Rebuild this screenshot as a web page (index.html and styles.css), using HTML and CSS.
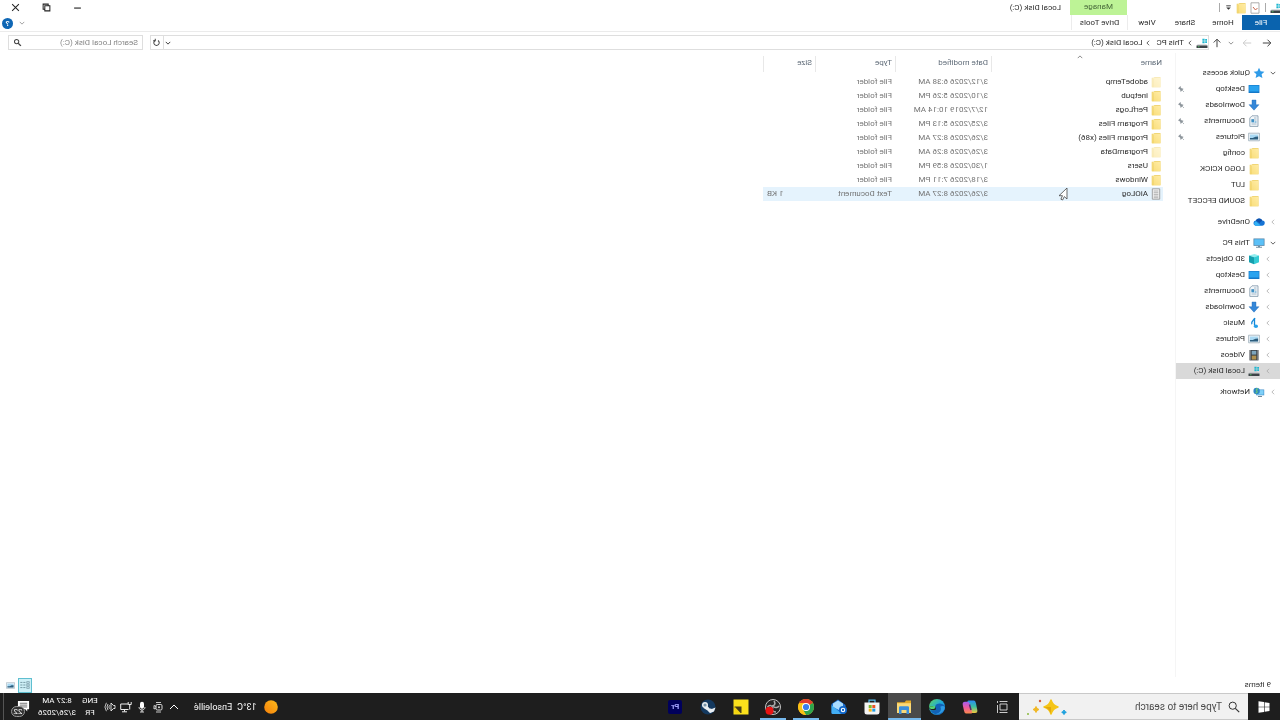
FILE: index.html
```
<!DOCTYPE html>
<html lang="en">
<head>
    <meta charset="UTF-8">
    <meta name="viewport" content="width=device-width, initial-scale=1.0">
    <title>Local Disk (C:)</title>
    <link rel="stylesheet" href="styles.css">
</head>
<body>
    <!-- Shared icons -->
    <svg class="sprite" aria-hidden="true">
        <defs>
            <linearGradient id="gFolder" x1="0" y1="0" x2="1" y2="1">
                <stop offset="0" stop-color="#ffeca6"/><stop offset="1" stop-color="#f9dd78"/>
            </linearGradient>
            <linearGradient id="gEdge" x1="0" y1="1" x2="1" y2="0">
                <stop offset="0" stop-color="#1567c8"/><stop offset=".5" stop-color="#1fa9dc"/><stop offset="1" stop-color="#62d858"/>
            </linearGradient>
            <linearGradient id="gCopA" x1="0" y1="0" x2="0" y2="1">
                <stop offset="0" stop-color="#2a8bf2"/><stop offset=".5" stop-color="#39c0a0"/><stop offset="1" stop-color="#f5c83c"/>
            </linearGradient>
            <linearGradient id="gCopB" x1="0" y1="0" x2="0" y2="1">
                <stop offset="0" stop-color="#a45cf0"/><stop offset=".5" stop-color="#ee5a9c"/><stop offset="1" stop-color="#fa8a4c"/>
            </linearGradient>
            <linearGradient id="gSun" x1="0" y1="0" x2="1" y2="1">
                <stop offset="0" stop-color="#fdbb1c"/><stop offset="1" stop-color="#f57f0a"/>
            </linearGradient>
        </defs>
        <symbol id="folder" viewBox="0 0 12 12">
            <path d="M1.500 1h6l.8.800h2v9.400H1.500z" fill="#ecd06a"/>
            <path d="M1.500 1.800h6.700l1.700 1v8.400H1.500z" fill="url(#gFolder)"/>
            <path d="M9 2.800v8.400" stroke="#e5c655" stroke-width=".6"/>
        </symbol>
        <symbol id="drive" viewBox="0 0 12 12">
            <path d="M1.500 7.500h9l1 1.500H.5z" fill="#b9bec2"/>
            <path d="M.5 8.600h11v2.400H.5z" fill="#3c4347"/>
            <path d="M8.500 9.400h1.600v.8H8.500z" fill="#55d66b"/>
            <path d="M1 2h1.800v1.700H1zM3.400 1.700h2.200v2H3.400zM1 4.300h1.800v1.700H1zM3.400 4.300h2.200v2H3.400z" fill="#1fb6cf"/>
        </symbol>
        <symbol id="star" viewBox="0 0 12 12">
            <path d="M6 .8l1.600 3.500 3.800.4-2.800 2.600.8 3.800L6 9.200l-3.400 1.900.8-3.800L.6 4.700l3.800-.4z" fill="#2f9be8"/>
        </symbol>
        <symbol id="desktop" viewBox="0 0 12 12">
            <path d="M.6 2h10.800v8H.6z" fill="#1478c8"/>
            <path d="M1.200 2.600h9.600v5.900H1.200z" fill="#29a3ef"/>
        </symbol>
        <symbol id="download" viewBox="0 0 12 12">
            <path d="M4 1h4v4.700h3L6 11.200 1 5.700h3z" fill="#3587d8" stroke="#2269b5" stroke-width=".4"/>
        </symbol>
        <symbol id="document" viewBox="0 0 12 12">
            <path d="M2 .8h6l2.200 2.200v8.400H2z" fill="#f3f7fa" stroke="#7f96a8" stroke-width=".8"/>
            <path d="M3.500 3h2.500M3.500 5h5M3.500 9h5" stroke="#8fa9bc" stroke-width=".8"/>
            <path d="M6 4.200h2.600v3.200H6z" fill="#3f90c4"/><path d="M3.500 7h2" stroke="#3f90c4"/>
        </symbol>
        <symbol id="picture" viewBox="0 0 12 12">
            <path d="M.6 2.200h10.800v7.600H.6z" fill="#f4f7f9" stroke="#8fa3b0" stroke-width=".7"/>
            <path d="M1.900 3.500h8.200v5H1.900z" fill="#a8d8f3"/>
            <path d="M1.900 8.500V5.500l2.700.2 2.600 1.200 2.900.2v1.400z" fill="#2d5d7d"/>
        </symbol>
        <symbol id="cloud" viewBox="0 0 12 12">
            <path d="M3 9.800a2.600 2.600 0 01-.3-5.200A3.600 3.600 0 019.200 4.500a2.700 2.700 0 01.3 5.300z" fill="#1673d4"/>
            <path d="M4 9.800l5-4.600a2.500 2.500 0 01.5 4.600z" fill="#31b2f5"/>
            <path d="M2.700 4.600A3.600 3.600 0 019.200 4.500L5.500 7z" fill="#0f52ac"/>
        </symbol>
        <symbol id="pc" viewBox="0 0 12 12">
            <path d="M.5 1.500h11v7.300H.5z" fill="#4a7fa5"/>
            <path d="M1.200 2.200h9.600v5.900H1.200z" fill="#5bc0f7"/>
            <path d="M5 8.800h2v1H5zM3 9.800h6v1H3z" fill="#7190a3"/>
        </symbol>
        <symbol id="cube" viewBox="0 0 12 12">
            <path d="M1 2.600L5.500 1l5.500 1.600-5 1.700z" fill="#92eef0"/>
            <path d="M1 2.600l5 1.700v7L1 9.300z" fill="#35cbd4"/>
            <path d="M11 2.600L6 4.300v7l5-2z" fill="#159fae"/>
        </symbol>
        <symbol id="music" viewBox="0 0 12 12">
            <path d="M5.500 1v7.500" stroke="#1588d8" stroke-width="1.300"/>
            <path d="M5.200 1c.6 2.500 4.200 2.800 3 6.300" fill="none" stroke="#1588d8" stroke-width="1.300"/>
            <ellipse cx="4.100" cy="9.300" rx="2.100" ry="1.700" fill="#27a0ea"/>
        </symbol>
        <symbol id="video" viewBox="0 0 12 12">
            <path d="M1.500 1h9v10.400h-9z" fill="#3a3f44"/>
            <path d="M3.700 1.800h4.600v3.800H3.700z" fill="#7da5bd"/><path d="M3.700 6.600h4.600v4H3.700z" fill="#b0914f"/>
            <path d="M2.500 1.500v9.500M9.500 1.500v9.500" stroke="#c7ccd0" stroke-width=".8" stroke-dasharray="1 1"/>
        </symbol>
        <symbol id="network" viewBox="0 0 12 12">
            <path d="M.8 3.500h8v5.800h-8z" fill="#3f8fca"/><path d="M1.400 4.100h6.800v4.600H1.400z" fill="#7fd0f8"/>
            <path d="M3 10h4v1H3z" fill="#6b8799"/>
            <circle cx="8.400" cy="5" r="3.200" fill="#2f87c5"/><path d="M7 3c1.500-.6 2 1 1.200 1.800S8 7 9.500 7" stroke="#6ccb77" stroke-width="1.200" fill="none"/>
        </symbol>
        <symbol id="textfile" viewBox="0 0 12 12">
            <path d="M2.300.8h7.400v10.400H2.300z" fill="#f3f3f3" stroke="#8d8d8d" stroke-width=".8"/>
            <path d="M3.700 3h4.600M3.700 4.700h4.600M3.700 6.400h4.600M3.700 8.100h4.600M3.700 9.700h4.600" stroke="#999" stroke-width=".7"/>
        </symbol>
        <symbol id="pin" viewBox="0 0 12 12">
            <path d="M6.800 1.500l3.700 3.700-1 .5-.5-.1-2 2 .1 1.700-.9.700L2.300 6l.7-.9 1.700.1 2-2-.4-.8z" fill="#8d959b"/>
            <path d="M4.200 7.800L1.500 10.500" stroke="#8d959b"/>
        </symbol>
        <symbol id="chevRight" viewBox="0 0 8 8"><path d="M2.500 1L5.500 4l-3 3" fill="none" stroke="currentColor" stroke-width="1"/></symbol>
        <symbol id="chevDown" viewBox="0 0 8 8"><path d="M1 2.500L4 5.500l3-3" fill="none" stroke="currentColor" stroke-width="1.200"/></symbol>
        <symbol id="chevUp" viewBox="0 0 8 8"><path d="M1 5.500L4 2.500l3 3" fill="none" stroke="currentColor" stroke-width="1"/></symbol>
        <symbol id="arrow" viewBox="0 0 12 12"><path d="M10.200 6H2.200M5.500 2.700L2.200 6l3.300 3.300" fill="none" stroke="currentColor"/></symbol>
        <symbol id="search" viewBox="0 0 12 12"><circle cx="7.300" cy="4.700" r="3.600" fill="none" stroke="currentColor"/><path d="M4.700 7.300L.8 11.200" stroke="currentColor" stroke-width="1.200"/></symbol>
    </svg>

    <div class="screen">
        <header class="titlebar">
            <div class="quick-tools">
                <svg class="icon app-icon"><use href="#drive"/></svg>
                <span class="divider"></span>
                <button class="plain" aria-label="Properties">
                    <svg class="icon" viewBox="0 0 12 12"><path d="M2 .8h8v10.400H2z" fill="#fff" stroke="#999" stroke-width=".8"/><path d="M3.500 6l2 2 2.500-3" fill="none" stroke="#c8684f"/></svg>
                </button>
                <button class="plain" aria-label="New folder"><svg class="icon"><use href="#folder"/></svg></button>
                <button class="plain" aria-label="Customize">
                    <svg class="icon-sm" viewBox="0 0 8 8"><path d="M2 2.500h4" stroke="#333" stroke-width=".8"/><path d="M2 4h4L4 6z" fill="#333"/></svg>
                </button>
                <span class="divider"></span>
            </div>
            <div class="manage">Manage</div>
            <h1>Local Disk (C:)</h1>
            <div class="window-buttons">
                <button class="plain" aria-label="Minimize"><svg class="icon-sm" viewBox="0 0 8 8"><path d="M1 4.500h6" stroke="#222"/></svg></button>
                <button class="plain" aria-label="Restore"><svg class="icon-sm" viewBox="0 0 8 8"><path d="M1 2.500h4.500V7H1zM2.500 2.500V1H7v4.500H5.500" fill="none" stroke="#222" stroke-width=".9"/></svg></button>
                <button class="plain" aria-label="Close"><svg class="icon-sm" viewBox="0 0 8 8"><path d="M1 1l6 6M7 1L1 7" stroke="#222" stroke-width=".9"/></svg></button>
            </div>
        </header>

        <nav class="ribbon">
            <button class="tab file">File</button>
            <button class="tab">Home</button>
            <button class="tab">Share</button>
            <button class="tab">View</button>
            <button class="tab tools">Drive Tools</button>
            <div class="ribbon-end">
                <button class="plain muted" aria-label="Expand ribbon"><svg class="icon-xs"><use href="#chevDown"/></svg></button>
                <button class="help" aria-label="Help">?</button>
            </div>
        </nav>

        <div class="address-row">
            <button class="plain nav-btn" aria-label="Back"><svg class="icon"><use href="#arrow"/></svg></button>
            <button class="plain nav-btn disabled" aria-label="Forward"><svg class="icon flip"><use href="#arrow"/></svg></button>
            <button class="plain recent" aria-label="Recent"><svg class="icon-xs"><use href="#chevDown"/></svg></button>
            <button class="plain up" aria-label="Up"><svg class="icon" viewBox="0 0 12 12"><path d="M6 10.200V2.200M2.700 5.500L6 2.200l3.300 3.300" fill="none" stroke="#444"/></svg></button>
            <div class="address">
                <svg class="icon"><use href="#drive"/></svg>
                <svg class="icon-xs"><use href="#chevRight"/></svg>
                <a href="#">This PC</a>
                <svg class="icon-xs"><use href="#chevRight"/></svg>
                <a href="#">Local Disk (C:)</a>
                <button class="plain address-drop" aria-label="Previous locations"><svg class="icon-xs"><use href="#chevDown"/></svg></button>
                <button class="plain refresh" aria-label="Refresh"><svg class="icon-sm" viewBox="0 0 8 8"><path d="M5.300 2.200A2.400 2.400 0 112.700 2.200" fill="none" stroke="#444" stroke-width=".9"/><path d="M5.100.7v1.800h1.900" fill="none" stroke="#444" stroke-width=".9"/></svg></button>
            </div>
            <div class="search-box">
                <input type="text" placeholder="Search Local Disk (C:)" aria-label="Search Local Disk (C:)">
                <svg class="icon-sm" viewBox="0 0 8 8"><circle cx="4.800" cy="3.200" r="1.900" fill="none" stroke="#444" stroke-width=".9"/><path d="M3.400 4.600L1 7" stroke="#444" stroke-width="1.200"/></svg>
            </div>
        </div>

        <div class="content">
            <aside class="sidebar">
                <ul>
                    <li><svg class="icon-xs"><use href="#chevDown"/></svg><svg class="icon"><use href="#star"/></svg><a href="#">Quick access</a></li>
                    <li class="sub"><svg class="icon"><use href="#desktop"/></svg><a href="#">Desktop</a><svg class="pin"><use href="#pin"/></svg></li>
                    <li class="sub"><svg class="icon"><use href="#download"/></svg><a href="#">Downloads</a><svg class="pin"><use href="#pin"/></svg></li>
                    <li class="sub"><svg class="icon"><use href="#document"/></svg><a href="#">Documents</a><svg class="pin"><use href="#pin"/></svg></li>
                    <li class="sub"><svg class="icon"><use href="#picture"/></svg><a href="#">Pictures</a><svg class="pin"><use href="#pin"/></svg></li>
                    <li class="sub"><svg class="icon"><use href="#folder"/></svg><a href="#">config</a></li>
                    <li class="sub"><svg class="icon"><use href="#folder"/></svg><a href="#">LOGO KCICK</a></li>
                    <li class="sub"><svg class="icon"><use href="#folder"/></svg><a href="#">LUT</a></li>
                    <li class="sub"><svg class="icon"><use href="#folder"/></svg><a href="#">SOUND EFCCET</a></li>
                </ul>
                <ul>
                    <li><svg class="icon-xs faint"><use href="#chevRight"/></svg><svg class="icon"><use href="#cloud"/></svg><a href="#">OneDrive</a></li>
                </ul>
                <ul>
                    <li><svg class="icon-xs"><use href="#chevDown"/></svg><svg class="icon"><use href="#pc"/></svg><a href="#">This PC</a></li>
                    <li class="sub open"><svg class="icon-xs faint"><use href="#chevRight"/></svg><svg class="icon"><use href="#cube"/></svg><a href="#">3D Objects</a></li>
                    <li class="sub open"><svg class="icon-xs faint"><use href="#chevRight"/></svg><svg class="icon"><use href="#desktop"/></svg><a href="#">Desktop</a></li>
                    <li class="sub open"><svg class="icon-xs faint"><use href="#chevRight"/></svg><svg class="icon"><use href="#document"/></svg><a href="#">Documents</a></li>
                    <li class="sub open"><svg class="icon-xs faint"><use href="#chevRight"/></svg><svg class="icon"><use href="#download"/></svg><a href="#">Downloads</a></li>
                    <li class="sub open"><svg class="icon-xs faint"><use href="#chevRight"/></svg><svg class="icon"><use href="#music"/></svg><a href="#">Music</a></li>
                    <li class="sub open"><svg class="icon-xs faint"><use href="#chevRight"/></svg><svg class="icon"><use href="#picture"/></svg><a href="#">Pictures</a></li>
                    <li class="sub open"><svg class="icon-xs faint"><use href="#chevRight"/></svg><svg class="icon"><use href="#video"/></svg><a href="#">Videos</a></li>
                    <li class="sub open selected"><svg class="icon-xs faint"><use href="#chevRight"/></svg><svg class="icon"><use href="#drive"/></svg><a href="#">Local Disk (C:)</a></li>
                </ul>
                <ul>
                    <li><svg class="icon-xs faint"><use href="#chevRight"/></svg><svg class="icon"><use href="#network"/></svg><a href="#">Network</a></li>
                </ul>
            </aside>

            <main class="files">
                <table>
                    <thead>
                        <tr>
                            <th class="col-name"><span>Name</span><svg class="sort"><use href="#chevUp"/></svg></th>
                            <th class="col-date"><span>Date modified</span></th>
                            <th class="col-type"><span>Type</span></th>
                            <th class="col-size"><span>Size</span></th>
                        </tr>
                    </thead>
                    <tbody>
                        <tr class="hidden-item"><td><svg class="icon"><use href="#folder"/></svg>adobeTemp</td><td>3/12/2026 6:38 AM</td><td>File folder</td><td></td></tr>
                        <tr><td><svg class="icon"><use href="#folder"/></svg>inetpub</td><td>3/10/2026 5:26 PM</td><td>File folder</td><td></td></tr>
                        <tr><td><svg class="icon"><use href="#folder"/></svg>PerfLogs</td><td>12/7/2019 10:14 AM</td><td>File folder</td><td></td></tr>
                        <tr><td><svg class="icon"><use href="#folder"/></svg>Program Files</td><td>3/25/2026 5:13 PM</td><td>File folder</td><td></td></tr>
                        <tr><td><svg class="icon"><use href="#folder"/></svg>Program Files (x86)</td><td>3/26/2026 8:27 AM</td><td>File folder</td><td></td></tr>
                        <tr class="hidden-item"><td><svg class="icon"><use href="#folder"/></svg>ProgramData</td><td>3/26/2026 8:26 AM</td><td>File folder</td><td></td></tr>
                        <tr><td><svg class="icon"><use href="#folder"/></svg>Users</td><td>1/30/2026 8:59 PM</td><td>File folder</td><td></td></tr>
                        <tr><td><svg class="icon"><use href="#folder"/></svg>Windows</td><td>3/18/2026 7:11 PM</td><td>File folder</td><td></td></tr>
                        <tr class="hovered"><td><svg class="icon"><use href="#textfile"/></svg>AiOLog</td><td>3/26/2026 8:27 AM</td><td>Text Document</td><td>1 KB</td></tr>
                    </tbody>
                </table>
            </main>
        </div>

        <footer class="status">
            <span>9 items</span>
            <div class="views">
                <button class="view active" aria-label="Details">
                    <svg viewBox="0 0 14 14"><path d="M2 3h3v2H2zM2 6h3v2H2zM2 9h3v2H2z" fill="none" stroke="#6b8f9a" stroke-width=".7"/><path d="M6.500 4H9M10 4h2.500M6.500 7H9M10 7h2.500M6.500 10H9M10 10h2.500" stroke="#6b8f9a"/></svg>
                </button>
                <button class="view" aria-label="Large icons"><svg class="icon-sm"><use href="#picture"/></svg></button>
            </div>
        </footer>

        <div class="taskbar">
            <button class="start" aria-label="Start">
                <svg viewBox="0 0 12 12"><path d="M.5 1.900l4.900-.7v4.500H.5zM6 1.100l5.500-.8v5.400H6zM.5 6.300h4.900v4.500L.5 10.100zM6 6.300h5.500v5.400L6 10.900z" fill="#fff"/></svg>
            </button>
            <div class="task-search">
                <svg class="icon"><use href="#search"/></svg>
                <input type="text" placeholder="Type here to search" aria-label="Type here to search">
                <svg class="sparkles" viewBox="0 0 42 20">
                    <path d="M18 3q1.600 5.400 7 7-5.400 1.600-7 7-1.600-5.400-7-7 5.400-1.600 7-7z" fill="#f5c518" stroke="#f5c518" stroke-width="1.500" stroke-linejoin="round"/>
                    <path d="M18 10h7q-5.400 1.600-7 7z" fill="#e3a90f"/>
                    <path d="M33 9.500q.7 2.300 3 3-2.300.7-3 3-.7-2.300-3-3 2.300-.7 3-3z" fill="#f0b826" stroke="#f0b826"/>
                    <path d="M5 13q.5 1.800 2.300 2.300-1.800.5-2.300 2.300-.5-1.800-2.300-2.300Q4.500 14.800 5 13z" fill="#1ba0de" stroke="#1ba0de"/>
                    <circle cx="29" cy="4" r="1.200" fill="#d65a3c"/><circle cx="41" cy="17" r="1" fill="#8ab83c"/>
                </svg>
            </div>
            <div class="apps">
                <button class="app" aria-label="Task View">
                    <svg viewBox="0 0 18 18"><path d="M5 6h7v6H5zM5 4V3M12 4V3M5 14v1M12 14v1M5 3.500h7M5 14.500h7M14.500 3v2M14.500 7v8" fill="none" stroke="#ddd" stroke-width=".9"/></svg>
                </button>
                <button class="app" aria-label="Copilot">
                    <svg viewBox="0 0 18 18"><path d="M5 2.500h5.500q1.500 0 1 1.500L9 13q-.6 2-2.500 2H4q-3 0-2.200-3.500l1.200-6Q3.600 2.500 5 2.500z" fill="url(#gCopA)"/><path d="M13 15.500H8q-1.500 0-1-1.500l2.200-8q.6-2.200 2.500-2.200H14q3 0 2.200 3.500l-1.200 5.500q-.5 2.700-2 2.700z" fill="url(#gCopB)"/><path d="M9.500 6.500L8 12" stroke="#512a6b" stroke-width="1.500"/></svg>
                </button>
                <button class="app" aria-label="Edge">
                    <svg viewBox="0 0 18 18"><circle cx="9" cy="9" r="8" fill="url(#gEdge)"/><path d="M1.200 8.500C3 5 9 4.500 10.800 8c.8 1.800-.8 2.400-.8 3.200 0 1.300 3.700 1.800 6 .3-2 4.800-7.500 5.800-10 4.500C2.500 14 1 11.500 1.200 8.500z" fill="#1262b6"/><path d="M5.700 8.700c-1.700 3 .5 6.500 4.600 7.100-4 .8-9-2-9.100-6.500.7-1.600 3-1.800 4.500-.6z" fill="#2d9be4"/><path d="M11 8.200c0 1.300-1 1.700-1 2.700 0 1.200 3 1.800 5.800.6 1.300-1.200 1-2.500.6-3.500z" fill="#1f1f1f"/><path d="M10.800 7.800c1 .5 5.800 1 6-.3.200 1.800-.5 3.200-1.800 3.400-2.200.4-4.300-.4-4-1.500z" fill="#52d272"/></svg>
                </button>
                <button class="app running current" aria-label="File Explorer">
                    <svg viewBox="0 0 18 18"><path d="M2 2.500h5l1.300 1.700H16V7H2z" fill="#e3a927"/><path d="M2 5.200h14v9.800H2z" fill="#fad978"/><path d="M4 9.500q0-1.200 1.200-1.200h7.600q1.200 0 1.200 1.200V16h-2.500v-4h-5v4H4z" fill="#3c8fdb"/></svg>
                </button>
                <button class="app" aria-label="Store">
                    <svg viewBox="0 0 18 18"><path d="M6 5V2.200h6V5" fill="none" stroke="#57bff0" stroke-width="1.200"/><path d="M1.500 4.500h15V14q0 2.500-2.500 2.500H4q-2.500 0-2.500-2.500z" fill="#f4f4f4"/><path d="M5.700 7h3v3h-3z" fill="#ec5426"/><path d="M9.300 7h3v3h-3z" fill="#7cb82f"/><path d="M5.700 10.600h3v3h-3z" fill="#1f9fe6"/><path d="M9.300 10.600h3v3h-3z" fill="#f8b617"/></svg>
                </button>
                <button class="app" aria-label="Outlook">
                    <svg viewBox="0 0 18 18"><path d="M2.500 7L10 1.500 16.500 6v8.500q0 1.500-1.500 1.500H5q-2.500 0-2.500-2z" fill="#1c6ed0"/><path d="M5 5.500l5-3 5 3V9l-6 3-4-3z" fill="#a9dcff"/><path d="M16.500 7v8q0 1-1.500 1H6z" fill="#43aef3"/><circle cx="5" cy="12" r="4" fill="#1167ca"/><circle cx="5" cy="12" r="1.700" fill="none" stroke="#fff" stroke-width="1.100"/></svg>
                </button>
                <button class="app running" aria-label="Chrome">
                    <svg viewBox="0 0 18 18"><circle cx="9" cy="9" r="8" fill="#fbc116"/><path d="M9 9L2.100 5A8 8 0 0115.900 5z" fill="#e33b2e"/><path d="M9 9L2.100 5A8 8 0 009 17l3.500-6z" fill="#2da44e"/><path d="M9 5h6.900A8 8 0 019 17l3.500-6z" fill="#fbc116"/><circle cx="9" cy="9" r="4" fill="#fff"/><circle cx="9" cy="9" r="3.100" fill="#3b7ded"/></svg>
                </button>
                <button class="app running" aria-label="OBS Studio">
                    <svg viewBox="0 0 18 18"><circle cx="9" cy="9" r="7.500" fill="#262626" stroke="#c4c4c4"/><path d="M8 3c-2 3 0 5 2 5M14.500 9c-2.500-3-5-1-5 1M6 14c4 0 4.500-2.500 3-4.500M3 8c1.500 2 4 2 5.500.5" fill="none" stroke="#aaa" stroke-width="1.600"/><circle cx="12.500" cy="12.700" r="4" fill="#e81313"/></svg>
                </button>
                <button class="app" aria-label="Sticky Notes">
                    <svg viewBox="0 0 18 18"><path d="M1.500 1.500h15v15h-15z" fill="#fbe11c"/><path d="M8.500 8.500h7V10l-5.500 5H8.500z" fill="#463e18"/><path d="M15.500 8.500v7H9z" fill="#f4d40f"/></svg>
                </button>
                <button class="app" aria-label="Steam">
                    <svg viewBox="0 0 18 18"><circle cx="9" cy="9" r="7.500" fill="#14395f"/><path d="M1.500 9.500l5 2 4-4.500 3 3-4 2.500-2.500 2.500-4-1.500z" fill="#e9eef2"/><circle cx="12" cy="7" r="3" fill="#e9eef2"/><circle cx="12" cy="7" r="1.600" fill="#7793a8"/><circle cx="6.500" cy="12.500" r="2" fill="#e9eef2"/></svg>
                </button>
                <button class="app" aria-label="Premiere Pro"><span class="premiere">Pr</span></button>
            </div>
            <div class="tray">
                <button class="weather">
                    <svg viewBox="0 0 14 14"><circle cx="7" cy="7" r="6.800" fill="url(#gSun)"/></svg>
                    <span>13°C</span><span>Ensoleillé</span>
                </button>
                <div class="tray-icons">
                    <button class="plain" aria-label="Show hidden icons"><svg viewBox="0 0 12 12"><path d="M2 8l4-4 4 4" fill="none" stroke="#fff"/></svg></button>
                    <button class="plain" aria-label="Meet now"><svg viewBox="0 0 12 12"><rect x="2" y="3.500" width="6" height="5.500" rx="1.200" fill="none" stroke="#ddd"/><circle cx="5" cy="6.200" r="1" fill="#ddd"/><path d="M8 5.500L10 4.500v3.500L8 7M3 1.500h5M3 11h5" fill="none" stroke="#ddd" stroke-width=".9"/></svg></button>
                    <button class="plain" aria-label="Microphone"><svg viewBox="0 0 12 12"><rect x="4" y=".8" width="4" height="7" rx="2" fill="#fff"/><path d="M3 6c0 4 6 4 6 0M6 9v2M4 11h4" fill="none" stroke="#fff" stroke-width=".8"/></svg></button>
                    <button class="plain" aria-label="Network"><svg viewBox="0 0 12 12"><path d="M4 3h7.300v5.500H3.500M5 10.800h5M7.500 8.500v2" fill="none" stroke="#eee"/><path d="M.8 1v2.500h3V1M2.300 3.500v5" fill="none" stroke="#eee"/></svg></button>
                    <button class="plain" aria-label="Volume"><svg viewBox="0 0 12 12"><path d="M1 4.500h1.500L5 2v8L2.500 7.500H1z" fill="none" stroke="#eee" stroke-width=".9"/><path d="M6.500 4.200q1.300 1.800 0 3.600M8 3q2 3 0 6M9.600 1.800q3 4.200 0 8.400" fill="none" stroke="#eee" stroke-width=".8"/></svg></button>
                </div>
                <button class="two-line lang"><span>ENG</span><span>FR</span></button>
                <button class="two-line clock"><span>8:27 AM</span><span>3/26/2026</span></button>
                <button class="notify" aria-label="Notifications">
                    <svg viewBox="0 0 14 14"><path d="M1 1h12v9H5l-2 2.500V10H1z" fill="#fff"/><path d="M3 3.500h8M3 5.500h8M3 7.500h8" stroke="#444" stroke-width=".8"/></svg>
                    <span class="badge">22</span>
                </button>
            </div>
        </div>

        <svg class="cursor" viewBox="0 0 10 14"><path d="M1 1v11l2.700-2.400L5.400 13l1.700-.8-1.600-3.500H9z" fill="#fff" stroke="#444" stroke-width=".8"/></svg>
    </div>
</body>
</html>
```

FILE: styles.css
```
:root {
    --accent: #0a63ae;
    --text: #2b2b2b;
    --muted: #737373;
    --line: #dedede;
    --taskbar: #1e1e1e;
}

* {
    margin: 0;
    padding: 0;
    box-sizing: border-box;
}

body {
    background: #fff;
    color: var(--text);
    font-family: "Segoe UI", Roboto, "Open Sans", sans-serif;
    font-size: 8px;
    line-height: 14px;
}

button,
input {
    font: inherit;
    color: inherit;
    border: none;
    background: none;
    outline: none;
}

a {
    color: inherit;
    text-decoration: none;
}

ul {
    list-style: none;
}

svg {
    display: block;
    flex: none;
}

.sprite {
    position: absolute;
    width: 0;
    height: 0;
}

/* The whole desktop is shown mirrored */
.screen {
    position: relative;
    display: flex;
    flex-direction: column;
    min-height: 100vh;
    overflow: hidden;
    transform: scaleX(-1);
}

.flip {
    transform: scaleX(-1);
}

.icon {
    width: 12px;
    height: 12px;
}

.icon-sm {
    width: 9px;
    height: 9px;
}

.icon-xs {
    width: 6px;
    height: 6px;
}

.plain {
    display: flex;
    align-items: center;
    justify-content: center;
}

/* Title bar */
.titlebar {
    display: flex;
    height: 15px;
    align-items: center;
}

.quick-tools {
    display: flex;
    align-items: center;
    gap: 2px;
    width: 153px;
}

.app-icon {
    margin-left: -2px;
}

.divider {
    width: 1px;
    height: 9px;
    margin: 0 2px;
    background: #aaa;
}

.manage {
    width: 57px;
    height: 15px;
    background: #bdf396;
    color: #47683a;
    text-align: center;
}

.titlebar h1 {
    flex: 1;
    padding-left: 9px;
    font-size: 8px;
    font-weight: normal;
}

.window-buttons {
    display: flex;
}

.window-buttons .plain {
    width: 31px;
    height: 14px;
}

/* Ribbon tabs */
.ribbon {
    display: flex;
    height: 17px;
    border-bottom: 1px solid #ebebeb;
}

.tab {
    width: 38px;
    height: 15px;
}

.tab.file {
    background: var(--accent);
    color: #fff;
}

.tab.tools {
    width: 57px;
    border: 1px solid #ececec;
    border-width: 0 1px;
}

.ribbon-end {
    display: flex;
    align-items: center;
    gap: 6px;
    margin-left: auto;
    padding-right: 2px;
}

.muted {
    color: #999;
}

.help {
    width: 11px;
    height: 11px;
    border-radius: 50%;
    background: #0f67b5;
    color: #fff;
    font-weight: bold;
    line-height: 11px;
}

/* Address row */
.address-row {
    display: flex;
    align-items: center;
    padding: 3px 8px 3px 3px;
}

.nav-btn {
    width: 20px;
    color: #444;
}

.nav-btn.disabled {
    color: #ccc;
}

.recent {
    width: 12px;
    color: #888;
}

.up {
    width: 16px;
}

.address {
    display: flex;
    flex: 1;
    align-items: center;
    height: 15px;
    border: 1px solid var(--line);
}

.address > .icon-xs {
    margin: 0 3px;
}

.address a {
    margin-right: 2px;
}

.address-drop {
    width: 9px;
    margin-left: auto;
}

.refresh {
    width: 13px;
    height: 13px;
    border-left: 1px solid var(--line);
}

.search-box {
    display: flex;
    align-items: center;
    width: 135px;
    height: 15px;
    margin-left: 7px;
    padding: 0 4px;
    border: 1px solid var(--line);
}

.search-box input {
    flex: 1;
    min-width: 0;
}

.search-box input::placeholder {
    color: #858585;
}

/* Navigation pane */
.content {
    display: flex;
    flex: 1;
}

.sidebar {
    width: 105px;
    padding-top: 12px;
    border-right: 1px solid #f5f5f5;
}

.sidebar ul {
    margin-bottom: 5px;
}

.sidebar li {
    display: flex;
    align-items: center;
    height: 16px;
    padding-left: 4px;
}

.sidebar li .icon-xs {
    margin-right: 5px;
    color: #555;
}

.sidebar li .icon-xs.faint {
    color: #a5a5a5;
}

.sidebar li.sub {
    padding-left: 20px;
}

.sidebar li.open {
    padding-left: 9px;
}

.sidebar li a {
    margin-left: 3px;
    white-space: nowrap;
}

.sidebar li.selected {
    background: #d9d9d9;
}

.pin {
    width: 8px;
    height: 8px;
    margin-left: auto;
    margin-right: 1px;
}

/* File list */
.files {
    flex: 1;
    padding: 3px 0 0 12px;
}

table {
    table-layout: fixed;
    width: 400px;
    border-collapse: collapse;
}

th {
    position: relative;
    padding-bottom: 3px;
    color: #5f6b78;
    font-weight: normal;
    text-align: left;
}

th span {
    display: block;
    height: 16px;
    padding-left: 3px;
    border-right: 1px solid #e8e8e8;
}

th.col-name span {
    padding-left: 1px;
}

.col-name {
    width: 172px;
}

.col-date {
    width: 96px;
}

.col-type {
    width: 80px;
}

.sort {
    position: absolute;
    top: -2px;
    left: 80px;
    width: 6px;
    height: 6px;
    color: #666;
}

td {
    height: 14px;
    padding-left: 3px;
    color: var(--muted);
    white-space: nowrap;
}

td:first-child {
    display: flex;
    align-items: center;
    gap: 2px;
    padding-left: 1px;
    color: var(--text);
}

td:last-child {
    padding-right: 4px;
    text-align: right;
}

.hidden-item .icon {
    opacity: 0.5;
}

.hovered {
    background: #e5f3fd;
}

/* Status bar */
.status {
    display: flex;
    align-items: center;
    justify-content: space-between;
    height: 16px;
    padding: 0 4px 0 9px;
}

.views {
    display: flex;
    align-items: center;
}

.view {
    display: flex;
    align-items: center;
    justify-content: center;
    width: 14px;
    height: 15px;
}

.view.active {
    border: 1px solid #5fbfd0;
    background: #cdeff6;
}

/* Taskbar */
.taskbar {
    display: flex;
    height: 27px;
    background: var(--taskbar);
    color: #fff;
}

.start {
    display: flex;
    align-items: center;
    justify-content: center;
    width: 32px;
}

.start svg {
    width: 12px;
    height: 12px;
}

.task-search {
    display: flex;
    align-items: center;
    width: 229px;
    padding: 0 8px;
    border: 1px solid #c9c9c9;
    border-width: 1px 0;
    background: #f1f1f1;
    color: #333;
    font-size: 10px;
}

.task-search input {
    flex: 1;
    min-width: 0;
    margin-left: 6px;
}

.task-search input::placeholder {
    color: #4c4c4c;
}

.sparkles {
    width: 42px;
    height: 20px;
}

.apps {
    display: flex;
    width: 360px;
}

.app {
    display: flex;
    flex: 1;
    align-items: center;
    justify-content: center;
}

.app svg {
    width: 18px;
    height: 18px;
}

.app.running {
    background: linear-gradient(#76b9ed, #76b9ed) center bottom / 26px 2px no-repeat;
}

.app.current {
    background-color: #4a4a4a;
    background-size: 100% 2px;
}

.premiere {
    width: 14px;
    height: 14px;
    border-radius: 2px;
    background: #00005b;
    color: #a5a5ff;
    font-weight: bold;
    line-height: 14px;
}

.tray {
    display: flex;
    align-items: center;
    margin-left: auto;
}

.weather {
    display: flex;
    align-items: center;
    gap: 5px;
    margin-right: 14px;
    font-size: 9px;
}

.weather svg {
    width: 14px;
    height: 14px;
    margin-right: 2px;
}

.tray-icons {
    display: flex;
    gap: 4px;
}

.tray-icons svg {
    width: 12px;
    height: 12px;
}

.two-line {
    display: flex;
    flex-direction: column;
    align-items: center;
    line-height: 12px;
}

.lang {
    width: 28px;
}

.clock {
    width: 38px;
}

.notify {
    position: relative;
    width: 35px;
    height: 27px;
    margin-right: 3px;
    border-right: 1px solid #555;
}

.notify svg {
    width: 13px;
    height: 13px;
    margin-left: 8px;
}

.badge {
    position: absolute;
    left: 13px;
    bottom: 3px;
    width: 14px;
    height: 11px;
    border: 1px solid #999;
    border-radius: 6px;
    background: #333;
    line-height: 9px;
}

/* Mouse pointer over the file list */
.cursor {
    position: absolute;
    top: 187px;
    left: 212px;
    width: 10px;
    height: 14px;
}
```
